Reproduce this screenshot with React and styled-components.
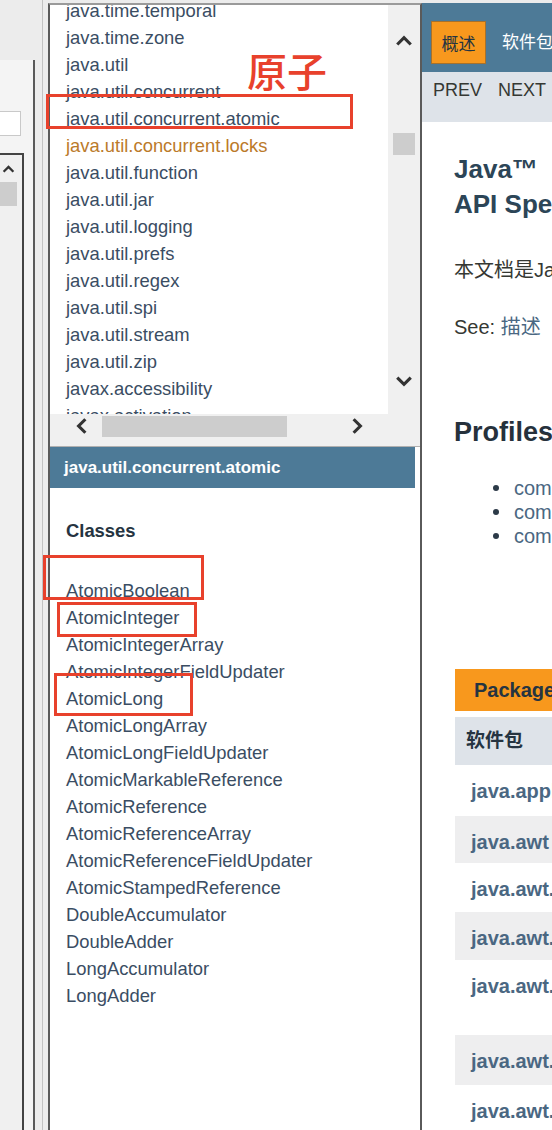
import React from 'react';
import styled, { createGlobalStyle } from 'styled-components';

const GlobalStyle = createGlobalStyle`
  *, *::before, *::after { box-sizing: border-box; }
  html, body { margin: 0; padding: 0; }
  body {
    font-family: "Liberation Sans", "Noto Sans CJK SC", sans-serif;
    background: #ececec;
  }
  ul { margin: 0; padding: 0; list-style: none; }
`;

const packages = [
   'java.time.temporal',
   'java.time.zone',
   'java.util',
   'java.util.concurrent',
   'java.util.concurrent.atomic',
   'java.util.concurrent.locks',
   'java.util.function',
   'java.util.jar',
   'java.util.logging',
   'java.util.prefs',
   'java.util.regex',
   'java.util.spi',
   'java.util.stream',
   'java.util.zip',
   'javax.accessibility',
   'javax.activation',
];

const classes = [
   'AtomicBoolean',
   'AtomicInteger',
   'AtomicIntegerArray',
   'AtomicIntegerFieldUpdater',
   'AtomicLong',
   'AtomicLongArray',
   'AtomicLongFieldUpdater',
   'AtomicMarkableReference',
   'AtomicReference',
   'AtomicReferenceArray',
   'AtomicReferenceFieldUpdater',
   'AtomicStampedReference',
   'DoubleAccumulator',
   'DoubleAdder',
   'LongAccumulator',
   'LongAdder',
];

const rows = [
   { name: 'java.applet', h: 51 },
   { name: 'java.awt', h: 47 },
   { name: 'java.awt.color', h: 49 },
   { name: 'java.awt.datatransfer', h: 48 },
   { name: 'java.awt.desktop', h: 75 },
   { name: 'java.awt.dnd', h: 50 },
   { name: 'java.awt.event', h: 60 },
];

const Chevron = ({ dir, size = 18 }) => {
   const pts = {
      up: '2,12 8,6 14,12',
      down: '2,5 8,11 14,5',
      left: '11,2 5,8 11,14',
      right: '5,2 11,8 5,14',
   }[dir];
   return (
      <svg width={size} height={size} viewBox="0 0 16 16">
         <polyline points={pts} fill="none" stroke="#333" strokeWidth="2.8" />
      </svg>
   );
};

const App = () => {
   return (
      <>
         <GlobalStyle />
         <Page>
            <LeftStrip>
               <InnerPanel>
                  <SearchBox />
                  <ListBox>
                     <ArrowCell>
                        <Chevron dir="up" size={13} />
                     </ArrowCell>
                     <SmallThumb />
                  </ListBox>
               </InnerPanel>
            </LeftStrip>
            <Spacer />
            <MiddleFrame>
               <PackagePane>
                  <PackageList>
                     <ul>
                        {packages.map((p) => (
                           <ListItem key={p} $visited={p === 'java.util.concurrent.locks'}>
                              {p}
                           </ListItem>
                        ))}
                     </ul>
                  </PackageList>
                  <VScroll>
                     <VArrow $h={70}>
                        <Chevron dir="up" />
                     </VArrow>
                     <VThumb />
                     <VArrow $h={66} $bottom>
                        <Chevron dir="down" />
                     </VArrow>
                  </VScroll>
                  <HScroll>
                     <Chevron dir="left" />
                     <HThumb />
                     <HRight>
                        <Chevron dir="right" />
                     </HRight>
                  </HScroll>
                  <Corner />
               </PackagePane>
               <Divider />
               <ClassPane>
                  <ClassHeader>java.util.concurrent.atomic</ClassHeader>
                  <ClassesTitle>Classes</ClassesTitle>
                  <ClassList>
                     {classes.map((c) => (
                        <ListItem key={c}>{c}</ListItem>
                     ))}
                  </ClassList>
               </ClassPane>
            </MiddleFrame>
            <RightFrame>
               <TopNav>
                  <Tab>概述</Tab>
                  <NavLink>软件包</NavLink>
               </TopNav>
               <SubNav>
                  <span>PREV</span>
                  <span>NEXT</span>
               </SubNav>
               <Content>
                  <Title>
                     Java™
                     <br />
                     API Specification
                  </Title>
                  <Para>本文档是Java™平台标准版的API规范。</Para>
                  <SeeLine>
                     See: <InlineLink>描述</InlineLink>
                  </SeeLine>
                  <Profiles>Profiles</Profiles>
                  <ProfileList>
                     {['compact1', 'compact2', 'compact3'].map((p) => (
                        <ProfileItem key={p}>
                           <Dot />
                           {p}
                        </ProfileItem>
                     ))}
                  </ProfileList>
                  <Caption>Packages</Caption>
                  <Table>
                     <HeaderRow>软件包</HeaderRow>
                     {rows.map((r, i) => (
                        <Row key={r.name} $h={r.h} $alt={i % 2 === 1}>
                           {r.name}
                        </Row>
                     ))}
                  </Table>
               </Content>
            </RightFrame>

            <RedLabel>原子</RedLabel>
            <RedBox $x={46} $y={94} $w={307} $h={35} />
            <RedBox $x={43} $y={555} $w={161} $h={45} />
            <RedBox $x={57} $y={602} $w={140} $h={35} />
            <RedBox $x={54} $y={673} $w={139} $h={43} />
         </Page>
      </>
   );
};

const Page = styled.div`
   position: relative;
   display: flex;
   width: 552px;
   height: 1130px;
   overflow: hidden;
   background: #ececec;
`;

const LeftStrip = styled.div`
   flex: none;
   width: 43px;
   display: flex;
   flex-direction: column;
   padding-top: 60px;
   border-right: 1px solid #c2c2c2;
`;

const InnerPanel = styled.div`
   flex: 1;
   width: 35px;
   display: flex;
   flex-direction: column;
   background: #f4f4f4;
   border-right: 2px solid #5a5a5a;
`;

const SearchBox = styled.div`
   margin-top: 51px;
   width: 21px;
   height: 25px;
   background: #fff;
   border: 1px solid #c9c9c9;
   border-left: none;
`;

const ListBox = styled.div`
   flex: 1;
   margin-top: 17px;
   width: 24px;
   background: #f0f0f0;
   border-top: 2px solid #444;
   border-right: 2px solid #444;
`;

const ArrowCell = styled.div`
   width: 17px;
   height: 27px;
   display: flex;
   align-items: center;
   justify-content: center;
`;

const SmallThumb = styled.div`
   width: 17px;
   height: 24px;
   background: #cdcdcd;
`;

const Spacer = styled.div`
   flex: none;
   width: 5px;
`;

const MiddleFrame = styled.div`
   flex: none;
   width: 374px;
   margin-top: 3px;
   display: flex;
   flex-direction: column;
   background: #fff;
   border-top: 2px solid #9a9a9a;
   border-left: 2px solid #5a5a5a;
   border-right: 2px solid #5a5a5a;
   font-size: 18.4px;
`;

const PackagePane = styled.div`
   flex: none;
   height: 433px;
   display: grid;
   grid-template-columns: 1fr 32px;
   grid-template-rows: 1fr 24px;
`;

const PackageList = styled.div`
   overflow: hidden;
   padding-left: 16px;
   background: #fff;

   ul {
      margin-top: -8px;
   }
`;

const ListItem = styled.li`
   line-height: 27px;
   white-space: nowrap;
   color: ${(p) => (p.$visited ? '#bb7a2a' : '#3a4d63')};
`;

const VScroll = styled.div`
   display: flex;
   flex-direction: column;
   align-items: center;
   background: #f0f0f0;
`;

const VArrow = styled.div`
   height: ${(p) => p.$h}px;
   width: 100%;
   display: flex;
   align-items: center;
   justify-content: center;
   margin-top: ${(p) => (p.$bottom ? 'auto' : '0')};
`;

const VThumb = styled.div`
   margin-top: 58px;
   width: 22px;
   height: 22px;
   background: #cdcdcd;
`;

const HScroll = styled.div`
   display: flex;
   align-items: center;
   padding-left: 23px;
   background: #f0f0f0;
`;

const HThumb = styled.div`
   margin-left: 11px;
   width: 185px;
   height: 21px;
   background: #cdcdcd;
`;

const HRight = styled.div`
   margin-left: auto;
   margin-right: 22px;
   display: flex;
`;

const Corner = styled.div`
   background: #f0f0f0;
`;

const Divider = styled.div`
   flex: none;
   height: 9px;
   background: #f0f0f0;
   border-bottom: 1px solid #b0b0b0;
`;

const ClassPane = styled.div`
   flex: 1;
   background: #fff;
`;

const ClassHeader = styled.div`
   height: 41px;
   margin-right: 5px;
   padding-left: 14px;
   display: flex;
   align-items: center;
   background: #4d7a97;
   color: #fff;
   font-size: 17px;
   font-weight: bold;
`;

const ClassesTitle = styled.div`
   margin: 29px 0 0 16px;
   line-height: 27px;
   font-weight: bold;
   color: #253441;
`;

const ClassList = styled.ul`
   margin-top: 33px !important;
   padding-left: 16px !important;
`;

const RightFrame = styled.div`
   flex: 1;
   min-width: 0;
   margin-top: 3px;
   display: flex;
   flex-direction: column;
   background: #fff;
   overflow: hidden;
   white-space: nowrap;
`;

const TopNav = styled.div`
   flex: none;
   height: 69px;
   display: flex;
   align-items: flex-start;
   gap: 16px;
   padding: 18px 0 0 9px;
   background: #4d7a97;
`;

const Tab = styled.div`
   flex: none;
   width: 55px;
   height: 43px;
   display: flex;
   align-items: center;
   justify-content: center;
   background: #f8981d;
   border: 1px solid #a8712a;
   color: #253441;
   font-size: 17px;
`;

const NavLink = styled.div`
   line-height: 43px;
   color: #fff;
   font-size: 17px;
`;

const SubNav = styled.div`
   flex: none;
   height: 50px;
   display: flex;
   align-items: flex-start;
   gap: 16px;
   padding: 6px 0 0 11px;
   line-height: 24px;
   background: #dee3e9;
   color: #353833;
   font-size: 18px;
`;

const Content = styled.div`
   padding-left: 32px;
   color: #353833;
`;

const Title = styled.h1`
   margin: 30px 0 0;
   font-size: 26px;
   line-height: 35px;
   color: #2c4557;
`;

const Para = styled.div`
   margin-top: 36px;
   font-size: 20px;
   line-height: 24px;
`;

const SeeLine = styled(Para)`
   margin-top: 33px;
`;

const InlineLink = styled.span`
   color: #4a6782;
`;

const Profiles = styled.h2`
   margin: 78px 0 0;
   font-size: 27px;
   line-height: 30px;
   color: #26313c;
`;

const ProfileList = styled.ul`
   margin-top: 29px !important;
   padding-left: 39px !important;
`;

const ProfileItem = styled.li`
   display: flex;
   align-items: center;
   gap: 15px;
   line-height: 24px;
   font-size: 20px;
   color: #4a6782;
`;

const Dot = styled.span`
   flex: none;
   width: 6px;
   height: 6px;
   border-radius: 50%;
   background: #2c3a48;
`;

const Caption = styled.div`
   margin: 121px 0 0 1px;
   width: 600px;
   height: 42px;
   padding-left: 19px;
   line-height: 42px;
   background: #f8981d;
   color: #253441;
   font-size: 20px;
   font-weight: bold;
`;

const Table = styled.div`
   margin: 6px 0 0 1px;
   width: 600px;
`;

const HeaderRow = styled.div`
   height: 48px;
   padding-left: 11px;
   line-height: 48px;
   background: #dee3e9;
   color: #253441;
   font-size: 19px;
   font-weight: bold;
`;

const Row = styled.div`
   height: ${(p) => p.$h}px;
   padding: 14px 0 0 16px;
   line-height: 24px;
   background: ${(p) => (p.$alt ? '#eeeeef' : '#fff')};
   color: #4a6782;
   font-size: 20px;
   font-weight: bold;
`;

const RedBox = styled.div`
   position: absolute;
   left: ${(p) => p.$x}px;
   top: ${(p) => p.$y}px;
   width: ${(p) => p.$w}px;
   height: ${(p) => p.$h}px;
   border: 3px solid #e8412c;
   pointer-events: none;
`;

const RedLabel = styled.div`
   position: absolute;
   left: 247px;
   top: 47px;
   font-family: "Noto Sans CJK SC", sans-serif;
   font-size: 40px;
   font-weight: 500;
   line-height: 46px;
   color: #e8412c;
`;

export default App;
